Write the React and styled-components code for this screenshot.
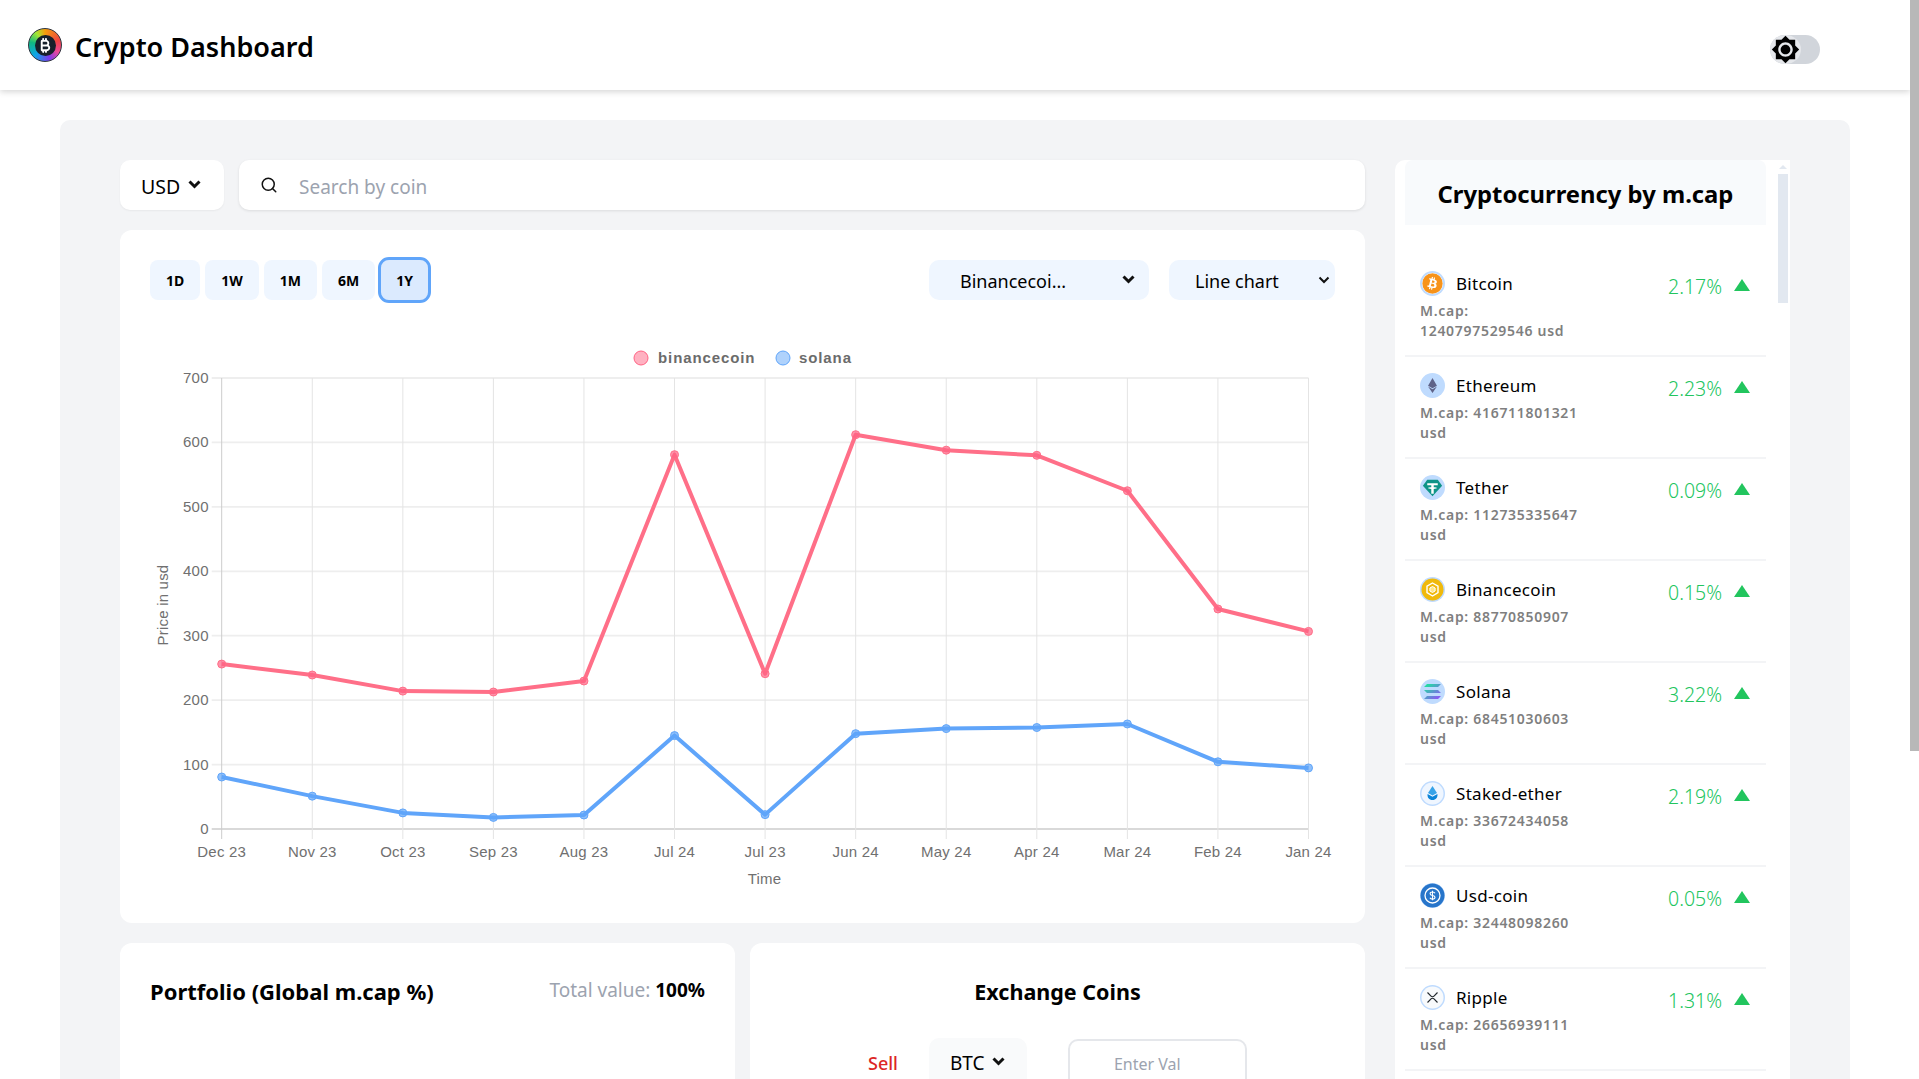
import React from "react";
import styled, { createGlobalStyle } from "styled-components";
import { FaBitcoin, FaEthereum } from "react-icons/fa";
import { FaBitcoinSign } from "react-icons/fa6";
import { MdBrightness7 } from "react-icons/md";
import { FiSearch } from "react-icons/fi";

const GlobalStyle = createGlobalStyle`
  body {
    margin: 0;
    background: #fff;
    color: #000;
    font-family: "Noto Sans", "Open Sans", sans-serif;
  }
  * {
    box-sizing: border-box;
  }
`;

const Page = styled.div`
  width: calc(100% - 9px);
`;

const PageScrollThumb = styled.div`
  position: fixed;
  top: 0;
  right: 0;
  width: 9px;
  height: 751px;
  background: #b8b8b8;
`;

const Header = styled.header`
  height: 90px;
  display: flex;
  align-items: center;
  justify-content: space-between;
  padding: 0 90px 0 28px;
  background: #fff;
  box-shadow: 0 2px 6px rgba(0, 0, 0, 0.16);
`;

const Brand = styled.div`
  display: flex;
  align-items: center;
  gap: 13px;
`;

const Logo = styled.div`
  width: 34px;
  height: 34px;
  border-radius: 50%;
  display: flex;
  align-items: center;
  justify-content: center;
  border: 1.5px solid #2f3640;
  background: conic-gradient(#f59e0b, #ef4444 20%, #ec4899 33%, #7c3aed 45%, #0ea5e9 62%, #10b981 78%, #a3e635 90%, #f59e0b);
`;

const LogoCore = styled.div`
  width: 21px;
  height: 21px;
  border-radius: 50%;
  background: #17202b;
  color: #fff;
  display: flex;
  align-items: center;
  justify-content: center;
`;

const AppTitle = styled.h1`
  margin: 2px 0 0;
  font-size: 27px;
  font-weight: 600;
`;

const Toggle = styled.div`
  width: 50px;
  height: 29px;
  margin-top: 8px;
  border-radius: 15px;
  background: #d1d5db;
  display: flex;
  align-items: center;
`;

const ToggleKnob = styled.div`
  width: 31px;
  height: 29px;
  border-radius: 50%;
  background: #e5e7eb;
  display: flex;
  align-items: center;
  justify-content: center;
`;

const Main = styled.main`
  padding: 30px 60px 47px;
`;

const Board = styled.div`
  display: grid;
  grid-template-columns: 1fr 395px;
  gap: 30px;
  align-items: start;
  padding: 40px 60px 60px;
  background: #f3f4f6;
  border-radius: 10px;
`;

const LeftColumn = styled.div`
  display: flex;
  flex-direction: column;
  gap: 20px;
`;

const Toolbar = styled.div`
  display: flex;
  gap: 15px;
`;

const Chevron = styled.svg`
  flex: none;
  margin-top: ${(p) => p.$lift}px;
`;

const BoldChevron = ({ lift = -4 }) => (
  <Chevron $lift={lift} width="13" height="9" viewBox="0 0 13 9">
    <path d="M1.500 1.500L6.500 6.500l5-5" fill="none" stroke="#111" strokeWidth="3" />
  </Chevron>
);

const ThinChevron = () => (
  <Chevron $lift={-2} width="12" height="8" viewBox="0 0 12 8">
    <path d="M1.500 1.500L6 6l4.500-4.500" fill="none" stroke="#111" strokeWidth="2" />
  </Chevron>
);

const CurrencySelect = styled.div`
  width: 104px;
  height: 50px;
  display: flex;
  align-items: center;
  gap: 8px;
  padding: 2px 0 0 21px;
  font-size: 19.500px;
  background: #fff;
  border-radius: 10px;
  box-shadow: 0 1px 2px rgba(0, 0, 0, 0.05);
`;

const SearchBox = styled.label`
  flex: 1;
  height: 50px;
  display: flex;
  align-items: center;
  gap: 21px;
  padding-left: 21px;
  background: #fff;
  border-radius: 10px;
  box-shadow: 0 1px 3px rgba(0, 0, 0, 0.1);
`;

const SearchInput = styled.input`
  flex: 1;
  padding: 4px 0 0;
  border: none;
  outline: none;
  background: transparent;
  font: inherit;
  font-size: 19px;
  &::placeholder {
    color: #9ca3af;
  }
`;

const Card = styled.section`
  background: #fff;
  border-radius: 12px;
`;

const ChartCard = styled(Card)`
  height: 693px;
  padding: 30px 30px 0;
  display: flex;
  flex-direction: column;
  gap: 30px;
`;

const ChartControls = styled.div`
  display: flex;
  align-items: center;
  justify-content: space-between;
`;

const RangeGroup = styled.div`
  display: flex;
  gap: 5px;
`;

const RangeButton = styled.button`
  height: 40px;
  padding: 0 ${(p) => (p.$active ? "15px" : "16px")};
  border: none;
  border-radius: 8px;
  font-family: inherit;
  font-size: 14px;
  font-weight: 700;
  color: #000;
  background: ${(p) => (p.$active ? "#dbeafe" : "#eff6ff")};
  outline: ${(p) => (p.$active ? "3px solid #60a5fa" : "none")};
  margin-left: ${(p) => (p.$active ? "1px" : "0")};
`;

const SelectGroup = styled.div`
  display: flex;
  gap: 20px;
`;

const ChartSelect = styled.div`
  width: ${(p) => p.$width}px;
  height: 40px;
  display: flex;
  align-items: center;
  justify-content: space-between;
  padding: 2px ${(p) => p.$right}px 0 ${(p) => p.$left}px;
  font-size: 18px;
  background: #eff6ff;
  border-radius: 10px;
`;

const ChartSvg = styled.svg`
  display: block;
  width: 1185px;
  height: 570px;
`;

const TickText = styled.text`
  font-family: "Liberation Sans", Arial, sans-serif;
  font-size: 15px;
  letter-spacing: 0.2px;
  fill: #707070;
`;

const LegendText = styled.text`
  font-family: "Liberation Sans", Arial, sans-serif;
  font-size: 15px;
  font-weight: 700;
  letter-spacing: 0.9px;
  fill: #6b6b6b;
`;

const BottomRow = styled.div`
  display: grid;
  grid-template-columns: 1fr 1fr;
  gap: 15px;
`;

const BottomCard = styled(Card)`
  height: 500px;
  padding: 24px 30px;
`;

const PortfolioHead = styled.div`
  display: flex;
  justify-content: space-between;
  align-items: flex-start;
  margin-top: -1px;
`;

const CardTitle = styled.h2`
  margin: 0;
  font-size: ${(p) => (p.$center ? "21.500px" : "22px")};
  line-height: 50px;
  font-weight: 700;
  text-align: ${(p) => (p.$center ? "center" : "left")};
`;

const TotalValue = styled.div`
  margin-top: 1px;
  font-size: 19px;
  line-height: 46px;
  color: #9ca3af;
  b {
    color: #000;
    font-weight: 700;
  }
`;

const ExchangeRow = styled.div`
  display: flex;
  align-items: flex-start;
  justify-content: center;
  margin-top: 21px;
`;

const SellLabel = styled.span`
  margin-top: 13px;
  margin-right: 31px;
  font-size: 18px;
  font-weight: 500;
  color: #dc2626;
`;

const CoinSelect = styled.div`
  width: 98px;
  height: 50px;
  display: flex;
  align-items: center;
  gap: 7px;
  padding-left: 21px;
  margin-right: 41px;
  font-size: 19px;
  background: #f9fafb;
  border-radius: 10px;
`;

const ValueInput = styled.input`
  width: 179px;
  height: 50px;
  margin-top: 1px;
  padding: 0 0 0 44px;
  border: 2px solid #e5e7eb;
  border-radius: 10px;
  outline: none;
  background: #fff;
  font: inherit;
  font-size: 16px;
  &::placeholder {
    color: #9ca3af;
  }
`;

const CoinPanel = styled.aside`
  height: 1283px;
  display: flex;
  padding: 0 2px 0 10px;
  gap: 12px;
  background: #fff;
  border-radius: 10px 0 0 0;
`;

const CoinList = styled.div`
  flex: 1;
  min-width: 0;
  overflow: hidden;
`;

const ListScrollBar = styled.div`
  flex: none;
  width: 10px;
  display: flex;
  flex-direction: column;
  align-items: center;
  padding-top: 5px;
`;

const ScrollArrow = styled.span`
  width: 0;
  height: 0;
  border-left: 4px solid transparent;
  border-right: 4px solid transparent;
  border-bottom: 4px solid #e2e8f0;
`;

const ScrollThumb = styled.div`
  width: 100%;
  height: 129px;
  margin-top: 5px;
  background: #e2e8f0;
`;

const PanelHead = styled.div`
  height: 65px;
  display: flex;
  align-items: center;
  justify-content: center;
  margin-bottom: 30px;
  padding-top: 2px;
  background: #f8fafc;
  border-radius: 8px 8px 0 0;
  font-size: 23.800px;
  font-weight: 700;
`;

const CoinRow = styled.div`
  height: 102px;
  display: flex;
  justify-content: space-between;
  padding: 16px 16px 0 15px;
  border-bottom: 2px solid #f3f4f6;
`;

const CoinInfo = styled.div`
  width: 170px;
`;

const CoinName = styled.div`
  display: flex;
  align-items: center;
  gap: 11px;
  height: 25px;
  font-size: 17px;
  letter-spacing: 0.3px;
`;

const CoinBadge = styled.span`
  flex: none;
  width: 25px;
  height: 25px;
  border-radius: 50%;
  display: flex;
  align-items: center;
  justify-content: center;
  background: #bfdbfe;
`;

const CoinCap = styled.div`
  margin-top: 5px;
  font-size: 14px;
  font-weight: 600;
  line-height: 20px;
  letter-spacing: 0.7px;
  color: #7f7f7f;
`;

const CoinChange = styled.div`
  display: flex;
  align-items: flex-start;
  gap: 12px;
  margin-top: 4px;
  font-size: 19.500px;
  font-weight: 300;
  line-height: 24px;
  color: #22c55e;
`;

const UpArrow = styled.span`
  margin-top: 4px;
  width: 0;
  height: 0;
  border-left: 8.500px solid transparent;
  border-right: 8.500px solid transparent;
  border-bottom: 12px solid #22c55e;
`;

const TetherIcon = () => (
  <svg width="21" height="21" viewBox="0 0 24 24">
    <path d="M6 3h12l5 7-11 12L1 10z" fill="#0f9488" />
    <path d="M6 7h12v2.400h-4.600v2.200c2 .1 3.800.5 3.800 1s-1.800.9-3.800 1V19h-2.800v-5.400c-2-.1-3.800-.5-3.800-1s1.800-.9 3.800-1V9.400H6z" fill="#fff" />
  </svg>
);

const BnbIcon = () => (
  <svg width="25" height="25" viewBox="0 0 25 25">
    <circle cx="12.500" cy="12.500" r="11" fill="#f0b90b" />
    <path d="M12.500 6l5.500 3.200v6.500l-5.500 3.300-5.500-3.300V9.200z" fill="none" stroke="#fff" strokeWidth="1.400" />
    <path d="M12.500 9.500l2.600 1.500v3l-2.600 1.500-2.600-1.500v-3z" fill="#fde68a" stroke="#fff" strokeWidth="1" />
  </svg>
);

const SolanaIcon = () => (
  <svg width="17" height="15" viewBox="0 0 17 15">
    <defs>
      <linearGradient id="sol" x1="0" y1="0" x2="1" y2="1">
        <stop offset="0" stopColor="#14f195" />
        <stop offset="1" stopColor="#9945ff" />
      </linearGradient>
    </defs>
    <path d="M3 0h14l-3 3H0zM0 6h14l3 3H3zM3 12h14l-3 3H0z" fill="url(#sol)" />
  </svg>
);

const StakedIcon = () => (
  <svg width="25" height="25" viewBox="0 0 25 25">
    <circle cx="12.500" cy="12.500" r="11" fill="#eff6ff" />
    <path d="M12.500 5l4.500 7-4.500 2.400L8 12z" fill="#38a3e8" />
    <path d="M7.600 13l4.900 2.800 4.900-2.800c.6 3.400-1.600 6-4.900 6s-5.500-2.600-4.900-6z" fill="#0b84d8" />
  </svg>
);

const UsdcIcon = () => (
  <svg width="25" height="25" viewBox="0 0 25 25">
    <circle cx="12.500" cy="12.500" r="12" fill="#2775ca" />
    <circle cx="12.500" cy="12.500" r="7.500" fill="none" stroke="#fff" strokeWidth="1.300" />
    <path d="M15 10.300c-.4-.9-1.300-1.300-2.500-1.300-1.400 0-2.400.7-2.400 1.800s1 1.500 2.400 1.700 2.500.6 2.500 1.800-1 1.800-2.500 1.800c-1.300 0-2.200-.5-2.600-1.400M12.500 7.700v9.600" fill="none" stroke="#fff" strokeWidth="1.100" />
  </svg>
);

const RippleIcon = () => (
  <svg width="25" height="25" viewBox="0 0 25 25">
    <circle cx="12.500" cy="12.500" r="11" fill="#f8fafc" />
    <path d="M7.500 7.500l3.500 3.600a2.100 2.100 0 0 0 3 0l3.500-3.600M7.500 17.500l3.500-3.600a2.100 2.100 0 0 1 3 0l3.500 3.600" fill="none" stroke="#23292f" strokeWidth="1.200" />
  </svg>
);

const BitcoinIcon = styled(FaBitcoin)`
  background: #fff;
  border-radius: 50%;
`;

const coins = [
  { name: "Bitcoin", cap: <>M.cap:<br />1240797529546 usd</>, change: "2.17%", icon: <BitcoinIcon size={21} color="#f7931a" /> },
  { name: "Ethereum", cap: "M.cap: 416711801321 usd", change: "2.23%", icon: <FaEthereum size={15} color="#5f6389" /> },
  { name: "Tether", cap: "M.cap: 112735335647 usd", change: "0.09%", icon: <TetherIcon /> },
  { name: "Binancecoin", cap: "M.cap: 88770850907 usd", change: "0.15%", icon: <BnbIcon /> },
  { name: "Solana", cap: "M.cap: 68451030603 usd", change: "3.22%", icon: <SolanaIcon /> },
  { name: "Staked-ether", cap: "M.cap: 33672434058 usd", change: "2.19%", icon: <StakedIcon /> },
  { name: "Usd-coin", cap: "M.cap: 32448098260 usd", change: "0.05%", icon: <UsdcIcon /> },
  { name: "Ripple", cap: "M.cap: 26656939111 usd", change: "1.31%", icon: <RippleIcon /> },
];

const months = ["Dec 23", "Nov 23", "Oct 23", "Sep 23", "Aug 23", "Jul 24", "Jul 23", "Jun 24", "May 24", "Apr 24", "Mar 24", "Feb 24", "Jan 24"];
const bnb = [256, 239, 214, 212.6, 229.7, 581, 241, 612, 588, 580, 525, 341.5, 306.7];
const sol = [80.7, 51, 25, 18, 21.7, 145, 22.3, 148, 155.8, 157.5, 163, 104.3, 94.8];

// plot area inside the svg, which starts at page x 150 / y 330
const plot = { left: 71.7, top: 48, width: 1086.8, height: 451 };
const xAt = (i) => plot.left + (plot.width / 12) * i;
const yAt = (v) => plot.top + plot.height - (v / 700) * plot.height;

const Series = ({ data, color, fill }) => (
  <g>
    <polyline
      points={data.map((v, i) => `${xAt(i)},${yAt(v)}`).join(" ")}
      fill="none"
      stroke={color}
      strokeWidth="4"
      strokeLinejoin="round"
    />
    {data.map((v, i) => (
      <circle key={i} cx={xAt(i)} cy={yAt(v)} r="4" fill={fill} stroke={color} strokeWidth="1" />
    ))}
  </g>
);

const PriceChart = () => (
  <ChartSvg viewBox="0 0 1185 570">
    <circle cx="491" cy="28" r="7" fill="rgba(255,99,132,0.5)" stroke="#ff6384" />
    <LegendText x="508" y="33">binancecoin</LegendText>
    <circle cx="633" cy="28" r="7" fill="rgba(96,165,250,0.5)" stroke="#60a5fa" />
    <LegendText x="649" y="33">solana</LegendText>

    {[0, 100, 200, 300, 400, 500, 600, 700].map((v) => (
      <g key={v}>
        <line x1={plot.left - 10} x2={plot.left + plot.width} y1={yAt(v)} y2={yAt(v)} stroke={v === 0 ? "#ccc" : "#eee"} strokeWidth={v === 0 ? 1.500 : 1.800} />
        <TickText x={plot.left - 13} y={yAt(v) + 5} textAnchor="end">{v}</TickText>
      </g>
    ))}
    {months.map((m, i) => (
      <g key={m}>
        <line x1={xAt(i)} x2={xAt(i)} y1={plot.top} y2={plot.top + plot.height + 10} stroke={i === 0 ? "#ccc" : "#e4e4e4"} />
        <TickText x={xAt(i)} y={527} textAnchor="middle">{m}</TickText>
      </g>
    ))}

    <Series data={bnb} color="#ff6f88" fill="rgba(255,99,132,0.7)" />
    <Series data={sol} color="#60a5fa" fill="rgba(96,165,250,0.7)" />

    <TickText x="614.500" y="554" textAnchor="middle">Time</TickText>
    <TickText transform="translate(18 275) rotate(-90)" textAnchor="middle">Price in usd</TickText>
  </ChartSvg>
);

const App = () => {
  const ranges = ["1D", "1W", "1M", "6M", "1Y"];

  return (
    <Page>
      <GlobalStyle />
      <PageScrollThumb />
      <Header>
        <Brand>
          <Logo>
            <LogoCore>
              <FaBitcoinSign size={15} />
            </LogoCore>
          </Logo>
          <AppTitle>Crypto Dashboard</AppTitle>
        </Brand>
        <Toggle>
          <ToggleKnob>
            <MdBrightness7 size={29} color="#000" />
          </ToggleKnob>
        </Toggle>
      </Header>
      <Main>
        <Board>
          <LeftColumn>
            <Toolbar>
              <CurrencySelect>
                USD <BoldChevron />
              </CurrencySelect>
              <SearchBox>
                <FiSearch size={18} color="#111" />
                <SearchInput placeholder="Search by coin" />
              </SearchBox>
            </Toolbar>
            <ChartCard>
              <ChartControls>
                <RangeGroup>
                  {ranges.map((r) => (
                    <RangeButton key={r} $active={r === "1Y"}>{r}</RangeButton>
                  ))}
                </RangeGroup>
                <SelectGroup>
                  <ChartSelect $width={220} $left={31} $right={14}>
                    Binancecoi... <BoldChevron lift={-3} />
                  </ChartSelect>
                  <ChartSelect $width={166} $left={26} $right={5}>
                    Line chart <ThinChevron />
                  </ChartSelect>
                </SelectGroup>
              </ChartControls>
              <PriceChart />
            </ChartCard>
            <BottomRow>
              <BottomCard>
                <PortfolioHead>
                  <CardTitle>Portfolio (Global m.cap %)</CardTitle>
                  <TotalValue>
                    Total value: <b>100%</b>
                  </TotalValue>
                </PortfolioHead>
              </BottomCard>
              <BottomCard>
                <CardTitle $center>Exchange Coins</CardTitle>
                <ExchangeRow>
                  <SellLabel>Sell</SellLabel>
                  <CoinSelect>
                    BTC <BoldChevron />
                  </CoinSelect>
                  <ValueInput placeholder="Enter Val" />
                </ExchangeRow>
              </BottomCard>
            </BottomRow>
          </LeftColumn>
          <CoinPanel>
            <CoinList>
              <PanelHead>Cryptocurrency by m.cap</PanelHead>
              {coins.map((c) => (
                <CoinRow key={c.name}>
                  <CoinInfo>
                    <CoinName>
                      <CoinBadge>{c.icon}</CoinBadge>
                      {c.name}
                    </CoinName>
                    <CoinCap>{c.cap}</CoinCap>
                  </CoinInfo>
                  <CoinChange>
                    {c.change}
                    <UpArrow />
                  </CoinChange>
                </CoinRow>
              ))}
            </CoinList>
            <ListScrollBar>
              <ScrollArrow />
              <ScrollThumb />
            </ListScrollBar>
          </CoinPanel>
        </Board>
      </Main>
    </Page>
  );
};

export default App;
